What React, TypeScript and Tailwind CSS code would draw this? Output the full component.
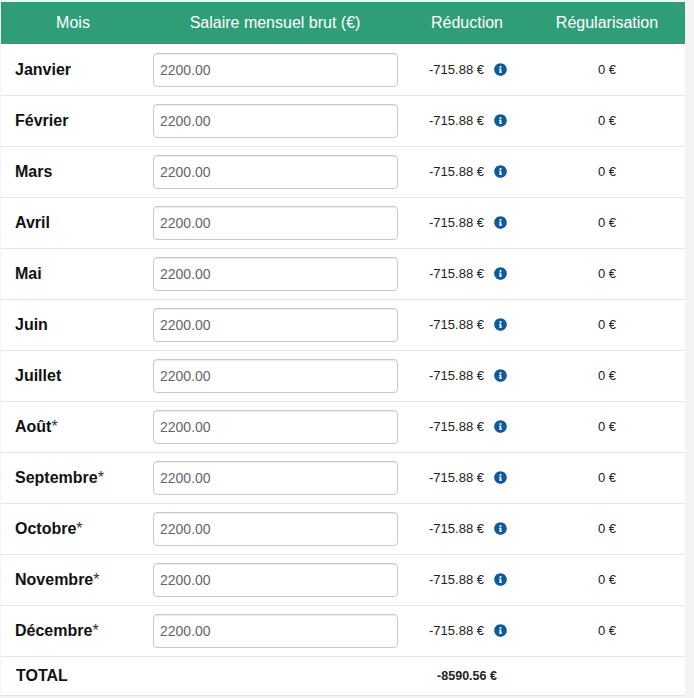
const months = ["Janvier","Février","Mars","Avril","Mai","Juin","Juillet","Août*","Septembre*","Octobre*","Novembre*","Décembre*"];

function Info() {
  return (
    <svg viewBox="0 0 512 512" className="w-[13px] h-[13px] ml-[10px] shrink-0">
      <path fill="#0f5a9c" d="M256 8C119 8 8 119 8 256s111 248 248 248 248-111 248-248S393 8 256 8zm0 110c23 0 42 19 42 42s-19 42-42 42-42-19-42-42 19-42 42-42zm56 254c0 7-5 12-12 12h-88c-7 0-12-5-12-12v-24c0-7 5-12 12-12h12v-64h-12c-7 0-12-5-12-12v-24c0-7 5-12 12-12h64c7 0 12 5 12 12v100h12c7 0 12 5 12 12v24z" />
    </svg>
  );
}

export default function App() {
  const cols = "grid grid-cols-[144px_260px_124px_156px] items-center";
  return (
    <div className="w-[694px] h-[698px] overflow-hidden bg-[#f3f3f3] pt-[2px] pl-px font-['Liberation_Sans',Arial,sans-serif]">
      <div className="w-[684px] bg-white border-b border-[#e2e2e2]">
        <div className={`${cols} h-[42px] bg-[#2f9e78] text-white text-base text-center`}>
          <div>Mois</div>
          <div>Salaire mensuel brut (€)</div>
          <div>Réduction</div>
          <div>Régularisation</div>
        </div>
        <div className="pt-px">
          {months.map((m) => {
            const star = m.endsWith("*");
            const name = star ? m.slice(0, -1) : m;
            return (
              <div key={m} className={`${cols} h-[51px] border-b border-[#e6e6e6]`}>
                <div className="pl-[14px] text-base text-[#111]">
                  <span className="font-bold">{name}</span>
                  {star && <span className="text-[#333]">*</span>}
                </div>
                <div className="px-2">
                  <div className="h-[34px] w-[245px] rounded border border-[#c8c8c8] shadow-[inset_0_1px_1px_rgba(0,0,0,0.08)] pl-[6px] flex items-center text-sm text-[#666]">
                    2200.00
                  </div>
                </div>
                <div className="flex items-center justify-center pl-[2px] text-[13px] text-[#222] -mt-[1px]">
                  <span>-715.88 €</span>
                  <Info />
                </div>
                <div className="text-center text-[13px] text-[#222] -mt-[1px]">0 €</div>
              </div>
            );
          })}
        </div>
        <div className={`${cols} h-[38px]`}>
          <div className="pl-[15px] text-base font-bold text-[#111]">TOTAL</div>
          <div />
          <div className="text-center text-[12.5px] font-bold text-[#222]">-8590.56 €</div>
          <div />
        </div>
      </div>
    </div>
  );
}
